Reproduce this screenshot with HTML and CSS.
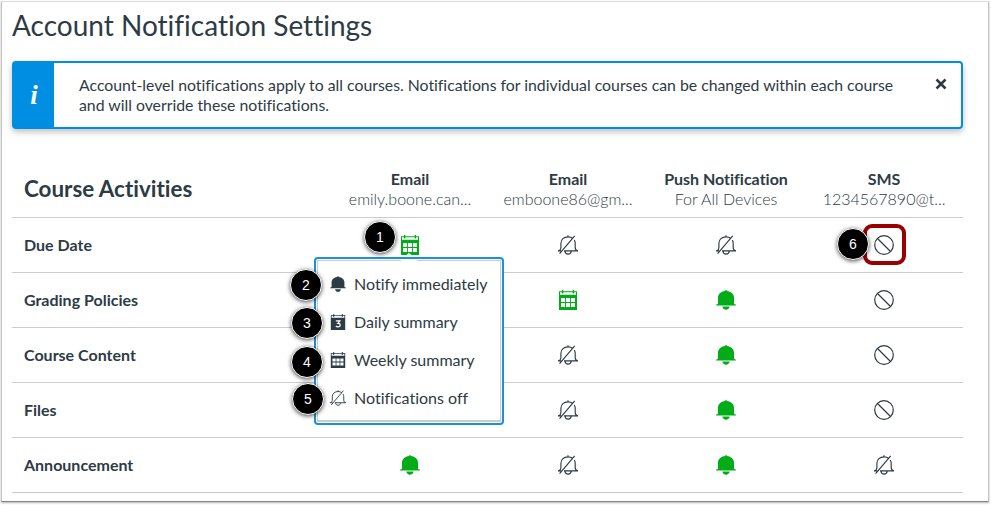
FILE: index.html
```html
<!DOCTYPE html>
<html lang="en">
<head>
    <meta charset="UTF-8">
    <meta name="viewport" content="width=device-width, initial-scale=1.0">
    <title>Account Notification Settings</title>
    <link rel="stylesheet" href="styles.css">
</head>
<body>
    <!-- icons -->
    <svg class="defs" width="0" height="0">
        <symbol id="bell" viewBox="0 0 20 20">
            <path fill="currentColor" d="M9.2 .8a.8.8 0 0 1 1.600 0v.3c4.500.5 7.200 3.300 7.200 6.700v4.900c0 1.100.6 1.600 1.500 1.800.4.100.5.4.5.900H0c0-.5.100-.8.500-.9.900-.2 1.500-.7 1.500-1.800V7.800c0-3.400 2.700-6.200 7.200-6.700zM6.300 16.500h7.400c-.3 2-1.800 3.200-3.700 3.200s-3.400-1.200-3.700-3.200z"/>
        </symbol>
        <symbol id="bell-off" viewBox="0 0 20 20">
            <g fill="none" stroke="currentColor" stroke-width="1.150">
                <path d="M10 .3v1.500M2.900 13V8.300c0-3.800 3-6.400 7.100-6.400 2 0 3.600.5 4.900 1.600M16.300 5c.6 1 .9 2.100.9 3.300v4.500c0 1.700.8 2.600 2.400 2.900v.2H6M0 15.900h3.200M2.900 13c-.1 1.500-1 2.400-2.500 2.700M6.900 16.100c.3 1.900 1.400 3 3.200 3s2.900-1.100 3.200-3M1.600 18.700L16.700.9"/>
            </g>
        </symbol>
        <symbol id="calendar" viewBox="0 0 18 20">
            <path fill="currentColor" fill-rule="evenodd" d="M0 1.200h3V0h1.300v1.200h9.400V0H15v1.200h3V20H0zM1 2.300v2.500h16V2.300h-2v1.300h-1.300V2.300H4.300v1.300H3V2.300zM2.100 8v4h4V8zm4.900 0v4h4V8zm4.900 0v4h4V8zM2.100 13v4h4v-4zm4.900 0v4h4v-4zm4.900 0v4h4v-4z"/>
        </symbol>
        <symbol id="calendar-day" viewBox="0 0 18 20">
            <path fill="currentColor" fill-rule="evenodd" d="M0 1.200h3V0h1.300v1.200h9.400V0H15v1.200h3V20H0zM1 2.300v2.500h16V2.300h-2v1.300h-1.300V2.300H4.300v1.300H3V2.300z"/>
            <path fill="none" stroke="#fff" stroke-width="1.500" d="M6.300 8.700h5L8.800 11.600c1.800 0 2.900.7 2.900 2.100 0 1.500-1.200 2.300-2.700 2.300-1.100 0-2-.3-2.700-1"/>
        </symbol>
        <symbol id="no" viewBox="0 0 20 20">
            <g fill="none" stroke="currentColor" stroke-width="1.200">
                <circle cx="10" cy="10" r="9.300"/>
                <path d="M3.500 3.500l13 13"/>
            </g>
        </symbol>
    </svg>

    <div class="page">
        <h1>Account Notification Settings</h1>

        <div class="alert">
            <div class="alert-icon">i</div>
            <p>Account-level notifications apply to all courses. Notifications for individual courses can be changed within each course and will override these notifications.</p>
            <button class="close" aria-label="Close">
                <svg width="12" height="12" viewBox="0 0 12 12"><path d="M1.500 1.500l9 9M10.500 1.500l-9 9" stroke="currentColor" stroke-width="2.500"/></svg>
            </button>
        </div>

        <table>
            <tr class="head">
                <th class="title">Course Activities</th>
                <th>Email<span>emily.boone.can...</span></th>
                <th>Email<span>emboone86@gm...</span></th>
                <th>Push Notification<span>For All Devices</span></th>
                <th>SMS<span>1234567890@t...</span></th>
            </tr>
            <tr>
                <td>Due Date</td>
                <td>
                    <div class="cell">
                        <svg class="icon on"><use href="#calendar"/></svg>
                        <b class="num n1">1</b>
                        <div class="menu">
                            <ul>
                                <li><svg><use href="#bell"/></svg>Notify immediately</li>
                                <li><svg><use href="#calendar-day"/></svg>Daily summary</li>
                                <li><svg><use href="#calendar"/></svg>Weekly summary</li>
                                <li><svg><use href="#bell-off"/></svg>Notifications off</li>
                            </ul>
                            <b class="num n2">2</b>
                            <b class="num n3">3</b>
                            <b class="num n4">4</b>
                            <b class="num n5">5</b>
                        </div>
                    </div>
                </td>
                <td><svg class="icon"><use href="#bell-off"/></svg></td>
                <td><svg class="icon"><use href="#bell-off"/></svg></td>
                <td>
                    <div class="cell">
                        <svg class="icon"><use href="#no"/></svg>
                        <i class="mark"></i>
                        <b class="num n6">6</b>
                    </div>
                </td>
            </tr>
            <tr>
                <td>Grading Policies</td>
                <td></td>
                <td><svg class="icon on"><use href="#calendar"/></svg></td>
                <td><svg class="icon on"><use href="#bell"/></svg></td>
                <td><svg class="icon"><use href="#no"/></svg></td>
            </tr>
            <tr>
                <td>Course Content</td>
                <td></td>
                <td><svg class="icon"><use href="#bell-off"/></svg></td>
                <td><svg class="icon on"><use href="#bell"/></svg></td>
                <td><svg class="icon"><use href="#no"/></svg></td>
            </tr>
            <tr>
                <td>Files</td>
                <td></td>
                <td><svg class="icon"><use href="#bell-off"/></svg></td>
                <td><svg class="icon on"><use href="#bell"/></svg></td>
                <td><svg class="icon"><use href="#no"/></svg></td>
            </tr>
            <tr>
                <td>Announcement</td>
                <td><svg class="icon on"><use href="#bell"/></svg></td>
                <td><svg class="icon"><use href="#bell-off"/></svg></td>
                <td><svg class="icon on"><use href="#bell"/></svg></td>
                <td><svg class="icon"><use href="#bell-off"/></svg></td>
            </tr>
        </table>
    </div>
</body>
</html>
```
FILE: styles.css
```css
* {
    box-sizing: border-box;
}

body {
    margin: 0;
    padding: 1px 2px 3px 1px;
    height: 505px;
    overflow: hidden;
    background-color: #fff;
    color: #2d3b45;
    font-family: Lato, sans-serif;
    font-size: 16px;
    font-variant-ligatures: none;
}

.defs {
    position: absolute;
}

.page {
    height: 501px;
    padding: 0 26px 0 10px;
    border: 1px solid #c4c4c4;
    border-top-color: #dcdcdc;
    border-bottom-color: #858585;
    box-shadow: 0 1px 2px rgba(0, 0, 0, 0.3);
}

h1 {
    margin: 0;
    padding-top: 5px;
    height: 59px;
    font-size: 28px;
    font-weight: normal;
    line-height: 36px;
}

.alert {
    display: flex;
    width: 951px;
    height: 68px;
    border: 2px solid #008ee2;
    border-radius: 4px;
    box-shadow: 0 3px 6px rgba(0, 0, 0, 0.25);
}

.alert-icon {
    width: 40px;
    background-color: #008ee2;
    color: #fff;
    font: italic bold 27px/64px "Liberation Serif", serif;
    text-align: center;
}

.alert p {
    flex: 1;
    margin: 0;
    padding: 12px 0 0 25px;
    font-size: 15.8px;
    line-height: 20px;
}

.close {
    width: 62px;
    height: 45px;
    padding: 0 0 0 21px;
    border: 0;
    background: none;
    color: #2d3b45;
    text-align: center;
}

table {
    width: 951px;
    margin-top: 32px;
    border-collapse: separate;
    border-spacing: 0;
    table-layout: fixed;
}

th, td {
    width: 158px;
    height: 55px;
    padding: 0;
    border-bottom: 1px solid #c7cdd1;
    text-align: center;
    font-weight: bold;
}

.head th {
    height: 57px;
    line-height: 20px;
}

th span {
    display: block;
    font-weight: 300;
}

th:first-child, td:first-child {
    width: 319px;
    padding-left: 12px;
    text-align: left;
}

td:first-child {
    padding-bottom: 2px;
}

.head .title {
    font-size: 22.4px;
}

.icon {
    display: block;
    width: 20px;
    height: 20px;
    margin: 0 auto;
}

.on {
    color: #00ac18;
}

.cell {
    position: relative;
}

/* popup menu under the first icon */
.menu {
    position: absolute;
    z-index: 1;
    top: 22px;
    left: -17px;
    width: 190px;
    height: 168px;
    padding: 1px;
    border: 2px solid #1a90de;
    border-radius: 4px;
    background-color: #fff;
    font-weight: normal;
    text-align: left;
}

/* arrow: one part above the border, one over the inner line */
.menu::before, .menu::after {
    content: "";
    position: absolute;
    background-color: #fff;
}

.menu::before {
    top: -6px;
    left: 88px;
    width: 10px;
    height: 4px;
    clip-path: polygon(50% 0, 100% 100%, 0 100%);
}

.menu::after {
    top: 0;
    left: 85px;
    width: 16px;
    height: 3px;
}

.menu ul {
    height: 162px;
    margin: 0;
    padding: 3px 0 0 12px;
    border: 1px solid #c7cdd1;
    border-bottom-width: 2px;
    list-style: none;
}

.menu li {
    display: flex;
    align-items: center;
    height: 38px;
    white-space: nowrap;
}

.menu li svg {
    width: 16px;
    height: 16px;
    margin-top: 2px;
    margin-right: 8px;
}

/* red box round the SMS icon */
.mark {
    position: absolute;
    top: -11px;
    left: 58px;
    width: 43px;
    height: 41px;
    border: 4px solid #990000;
    border-radius: 9px;
}

.num {
    position: absolute;
    z-index: 2;
    width: 32px;
    height: 32px;
    border: 1px solid #fff;
    border-radius: 50%;
    background-color: #000;
    box-shadow: 0 1px 4px rgba(0, 0, 0, 0.7);
    color: #fff;
    font: 14px/30px "Liberation Sans", sans-serif;
    text-align: center;
}

.n1 { top: -14px; left: 33px; }
.n2 { top: 10px; left: -26px; }
.n3 { top: 48px; left: -25px; }
.n4 { top: 87px; left: -25px; }
.n5 { top: 124px; left: -24px; }
.n6 { top: -7px; left: 32px; }
```
